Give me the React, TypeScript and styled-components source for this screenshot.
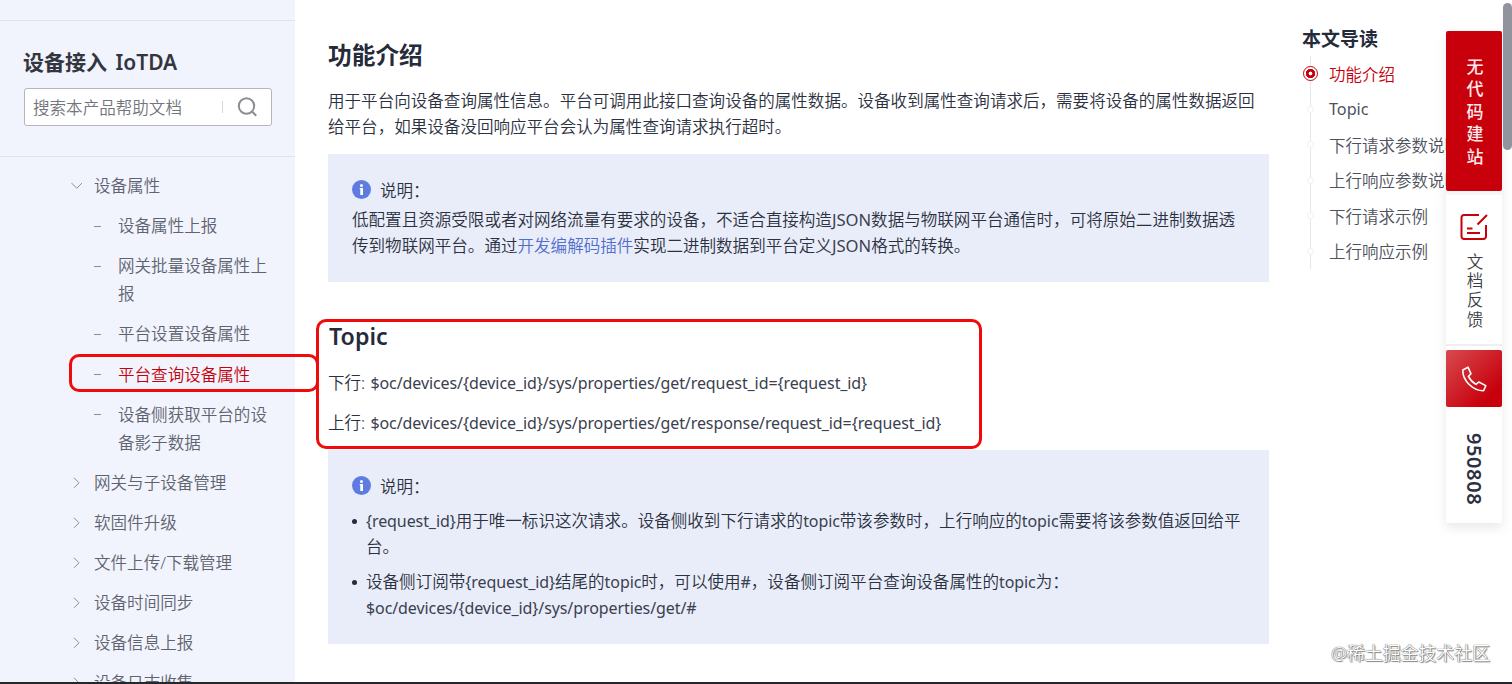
import React from 'react';
import styled, { createGlobalStyle } from 'styled-components';

type MenuItem = {
    lines: string[],
    kind: 'open' | 'closed' | 'leaf',
    active?: boolean,
}

const menu: MenuItem[] = [
    { lines: ['设备属性'], kind: 'open' },
    { lines: ['设备属性上报'], kind: 'leaf' },
    { lines: ['网关批量设备属性上', '报'], kind: 'leaf' },
    { lines: ['平台设置设备属性'], kind: 'leaf' },
    { lines: ['平台查询设备属性'], kind: 'leaf', active: true },
    { lines: ['设备侧获取平台的设', '备影子数据'], kind: 'leaf' },
    { lines: ['网关与子设备管理'], kind: 'closed' },
    { lines: ['软固件升级'], kind: 'closed' },
    { lines: ['文件上传/下载管理'], kind: 'closed' },
    { lines: ['设备时间同步'], kind: 'closed' },
    { lines: ['设备信息上报'], kind: 'closed' },
    { lines: ['设备日志收集'], kind: 'closed' },
]

const toc = ['功能介绍', 'Topic', '下行请求参数说明', '上行响应参数说明', '下行请求示例', '上行响应示例'];

const MenuMark: React.FC<{ kind: MenuItem['kind'] }> = ({ kind }) => {
    if (kind === 'leaf') {
        return <Dash />
    }
    return (
        <Arrow width="12" height="12" viewBox="0 0 12 12">
            <path d={kind === 'open' ? 'M1.5 3L6.8 8.3L12 3' : 'M4 0.8L9 5.8L4 10.8'} />
        </Arrow>
    )
}

const NoteTitle: React.FC = () => (
    <NoteHead>
        <svg width="19" height="19" viewBox="0 0 19 19">
            <circle cx="9.5" cy="9.5" r="9.5" fill="#5e7ce0" />
            <circle cx="9.5" cy="5.4" r="1.5" fill="#fff" />
            <path d="M7.8 8h3.2v7H8.3V9.3H7.8z" fill="#fff" />
        </svg>
        <span>说明：</span>
    </NoteHead>
)

const App: React.FC = () => {
    return (
        <Page>
            <GlobalStyle />
            <Sidebar>
                <SidebarTop />
                <SearchArea>
                    <ProductName>设备接入 IoTDA</ProductName>
                    <SearchBox>
                        <Placeholder>搜索本产品帮助文档</Placeholder>
                        <SearchDivider />
                        <svg width="20" height="20" viewBox="0 0 20 20" fill="none" stroke="#8d8e93" strokeWidth="2">
                            <circle cx="9.5" cy="9" r="7.7" />
                            <path d="M14.8 14.3L19.2 18.7" />
                        </svg>
                    </SearchBox>
                </SearchArea>
                <Menu>
                    {menu.map((item) => (
                        <MenuRow key={item.lines[0]} $leaf={item.kind === 'leaf'} $active={item.active}>
                            <MarkCell><MenuMark kind={item.kind} /></MarkCell>
                            <div>
                                {item.lines.map((line) => <MenuLine key={line}>{line}</MenuLine>)}
                            </div>
                        </MenuRow>
                    ))}
                </Menu>
            </Sidebar>

            <Content>
                <Heading>功能介绍</Heading>
                <Intro>
                    <Line>用于平台向设备查询属性信息。平台可调用此接口查询设备的属性数据。设备收到属性查询请求后，需要将设备的属性数据返回</Line>
                    <Line>给平台，如果设备没回响应平台会认为属性查询请求执行超时。</Line>
                </Intro>
                <Note $height={128}>
                    <NoteTitle />
                    <Line>低配置且资源受限或者对网络流量有要求的设备，不适合直接构造<Caps>JSON</Caps>数据与物联网平台通信时，可将原始二进制数据透</Line>
                    <Line>传到物联网平台。通过<Link>开发编解码插件</Link>实现二进制数据到平台定义<Caps>JSON</Caps>格式的转换。</Line>
                </Note>
                <TopicHeading>Topic</TopicHeading>
                <TopicLine>下行: <En>$oc/devices/{'{device_id}'}/sys/properties/get/request_id={'{request_id}'}</En></TopicLine>
                <TopicLine>上行: <En>$oc/devices/{'{device_id}'}/sys/properties/get/response/request_id={'{request_id}'}</En></TopicLine>
                <Note $height={194}>
                    <NoteTitle />
                    <Bullets>
                        <Bullet>
                            <Line><En>{'{request_id}'}</En>用于唯一标识这次请求。设备侧收到下行请求的<En>topic</En>带该参数时，上行响应的<En>topic</En>需要将该参数值返回给平</Line>
                            <Line>台。</Line>
                        </Bullet>
                        <Bullet>
                            <Line>设备侧订阅带<En>{'{request_id}'}</En>结尾的<En>topic</En>时，可以使用<En>#</En>，设备侧订阅平台查询设备属性的<En>topic</En>为：</Line>
                            <Line><En>$oc/devices/{'{device_id}'}/sys/properties/get/#</En></Line>
                        </Bullet>
                    </Bullets>
                </Note>
            </Content>

            <Toc>
                <TocTitle>本文导读</TocTitle>
                <TocList>
                    {toc.map((name, i) => (
                        <TocItem key={name} $active={i === 0}>
                            <TocDot $active={i === 0} />
                            <TocText $latin={name === 'Topic'}>{name}</TocText>
                        </TocItem>
                    ))}
                </TocList>
            </Toc>

            <FloatBar>
                <BuildSite><BuildText>无代码建站</BuildText></BuildSite>
                <Feedback>
                    <svg width="28" height="28" viewBox="0 0 28 28" fill="none" stroke="#c7000b" strokeWidth="2">
                        <path d="M19 2H4a2.5 2.5 0 0 0-2.5 2.5v19A2.5 2.5 0 0 0 4 26h19.5a2.5 2.5 0 0 0 2.5-2.5V12" />
                        <path d="M27 2L17.5 11.5M7 15.5h5.5M7 20h13" />
                    </svg>
                    <FeedbackText>文档反馈</FeedbackText>
                </Feedback>
                <Phone>
                    <svg width="26" height="26" viewBox="0 0 26 26" fill="none" stroke="#fff" strokeWidth="1.6" strokeLinejoin="round">
                        <path d="M1.8 4L7 1.2L10 7.8L7.4 10.4C9 13.6 11.8 16.6 15 18.4L17.8 16L24.8 19.6L22.6 24.8C12.4 25 1.4 14.8 1.8 4Z" />
                    </svg>
                </Phone>
                <Hotline>950808</Hotline>
            </FloatBar>

            <Frame $left={69} $top={354} $width={250} $height={38} />
            <Frame $left={316} $top={319} $width={666} $height={130} />
            <ScrollThumb />
            <Watermark>@稀土掘金技术社区</Watermark>
            <BottomEdge />
        </Page>
    )
}

export default App;

const GlobalStyle = createGlobalStyle`
    body {
        margin: 0;
        overflow: hidden;
        background: #fff;
    }
    * {
        box-sizing: border-box;
    }
`
const Page = styled.div`
    position: relative;
    display: flex;
    width: 1512px;
    height: 684px;
    overflow: hidden;
    font-family: 'Noto Sans', 'Noto Sans CJK SC', sans-serif;
    font-weight: 350;
    font-size: 16.56px;
    color: #2b3140;
    white-space: nowrap;
`
const Sidebar = styled.aside`
    flex: none;
    width: 295px;
    height: 684px;
    overflow: hidden;
    background: #f1f4fd;
`
const SidebarTop = styled.div`
    height: 21px;
    border-bottom: 1px solid #dfe3ee;
`
const SearchArea = styled.div`
    height: 136px;
    padding: 26px 23px 0 24px;
    border-bottom: 1px solid #dfe3ee;
`
const ProductName = styled.div`
    height: 41px;
    margin-left: -1px;
    line-height: 31px;
    font-size: 21px;
    font-weight: 600;
    word-spacing: 3px;
    color: #33363e;
`
const SearchBox = styled.div`
    display: flex;
    align-items: center;
    height: 38px;
    padding: 0 14px 0 8px;
    border: 1px solid #b4b6bf;
    border-radius: 3px;
    background: #fff;
`
const Placeholder = styled.span`
    flex: 1;
    color: #73757c;
`
const SearchDivider = styled.span`
    width: 1px;
    height: 12px;
    margin-right: 14px;
    background: #d5d6da;
`
const Menu = styled.div`
    padding-top: 9px;
`
const MenuRow = styled.div<{ $leaf: boolean, $active?: boolean }>`
    display: flex;
    padding: 6px 0 6px ${p => p.$leaf ? 94 : 70}px;
    color: ${p => p.$active ? '#c7000b' : '#5f6370'};
`
const MarkCell = styled.span`
    display: flex;
    align-items: center;
    width: 24px;
    height: 28px;
`
const Arrow = styled.svg`
    fill: none;
    stroke: #8a8e99;
    stroke-width: 1;
    overflow: visible;
`
const Dash = styled.span`
    width: 7px;
    height: 1px;
    background: #8a8e99;
`
const MenuLine = styled.div`
    height: 28.12px;
    line-height: 28px;
`
const Content = styled.main`
    flex: none;
    width: 941px;
    margin-left: 33px;
    padding-top: 36px;
`
const Heading = styled.h4`
    margin: 0;
    height: 52px;
    line-height: 38px;
    font-size: 23.7px;
    font-weight: 700;
    color: #252b3a;
`
const Line = styled.div`
    height: 26px;
    line-height: 26px;
`
const Intro = styled.div`
    height: 66px;
`
const Note = styled.div<{ $height: number }>`
    height: ${p => p.$height}px;
    padding: 22px 24px 0;
    background: #e9edfa;
`
const NoteHead = styled.div`
    display: flex;
    align-items: center;
    gap: 9px;
    height: 31px;
    line-height: 28px;

    svg {
        margin-bottom: 4px;
    }
    span {
        margin-bottom: 2px;
    }
`
const En = styled.span`
    font-weight: 400;
    font-size: 16px;
    letter-spacing: -.09px;
    color: #3a404f;
`
const Caps = styled.span`
    font-weight: 400;
    font-size: 16.6px;
    color: #3a404f;
`
const Link = styled.span`
    color: #526ecc;
`
const TopicHeading = styled.h4`
    margin: 38px 0 0 1px;
    height: 43px;
    line-height: 33px;
    font-size: 23.2px;
    font-weight: 600;
    color: #252b3a;
`
const TopicLine = styled.div`
    height: 40px;
    line-height: 40px;
    word-spacing: 1px;

    & + ${Note} {
        margin-top: 7px;
    }
`
const Bullets = styled.ul`
    margin: 5px 0 0;
    padding: 0;
    list-style: none;
`
const Bullet = styled.li`
    position: relative;
    padding-left: 14px;
    margin-bottom: 9px;

    &::before {
        content: '';
        position: absolute;
        left: 0;
        top: 11px;
        width: 5px;
        height: 5px;
        border-radius: 50%;
        background: #252b3a;
    }
`
const Toc = styled.nav`
    flex: none;
    width: 200px;
    margin-left: 33px;
    padding-top: 25px;
`
const TocTitle = styled.div`
    height: 31px;
    line-height: 29px;
    font-size: 19px;
    font-weight: 700;
    color: #252b3a;
`
const TocList = styled.div`
    margin-left: 8px;
    height: 213px;
    border-left: 1px solid #e6e7ea;
`
const TocItem = styled.div<{ $active: boolean }>`
    display: flex;
    align-items: center;
    height: 35.5px;
    margin-left: -8px;
    gap: 11px;
    color: ${p => p.$active ? '#c7000b' : '#4e525c'};
`
const TocDot = styled.span<{ $active: boolean }>`
    width: ${p => p.$active ? 15 : 7}px;
    height: ${p => p.$active ? 15 : 7}px;
    margin: 0 ${p => p.$active ? 0 : 4}px;
    border-radius: 50%;
    border: 1px solid ${p => p.$active ? '#c7000b' : '#eeeff1'};
    background: ${p => p.$active
        ? 'radial-gradient(circle, #fff 1.6px, #c7000b 2.2px, #c7000b 4.4px, #fff 5px)'
        : '#fff'};
`
const TocText = styled.span<{ $latin: boolean }>`
    font-weight: ${p => p.$latin ? 400 : 350};
    font-size: ${p => p.$latin ? 16.2 : 16.5}px;
`
const FloatBar = styled.div`
    position: absolute;
    left: 1446px;
    top: 31px;
    width: 56px;
    height: 492px;
    border-radius: 2px;
    background: #fff;
    box-shadow: 0 5px 12px rgba(0, 0, 0, .09);
`
const BuildSite = styled.div`
    display: flex;
    align-items: center;
    justify-content: center;
    height: 160px;
    padding-top: 5px;
    border-radius: 2px;
    background: #c7000b;
`
const BuildText = styled.div`
    color: #ffe9e9;
    font-size: 17px;
    font-weight: 500;
    letter-spacing: 5.4px;
    writing-mode: vertical-rl;
`
const Feedback = styled.div`
    display: flex;
    flex-direction: column;
    align-items: center;
    height: 155px;
    margin-bottom: 4px;
    padding-top: 18px;
    border-bottom: 2px solid #eeeff1;
    border-top: 4px solid #f7f7f8;
`
const FeedbackText = styled.div`
    margin-top: 12px;
    writing-mode: vertical-rl;
    letter-spacing: 2.8px;
    color: #3c3f47;
`
const Phone = styled.div`
    display: flex;
    align-items: center;
    justify-content: center;
    height: 57px;
    border-radius: 2px;
    background: linear-gradient(135deg, #d84a50, #c7000b 80%);
`
const Hotline = styled.div`
    height: 116px;
    width: 56px;
    padding-top: 26px;
    line-height: 56px;
    writing-mode: vertical-rl;
    font-size: 20px;
    font-weight: 600;
    letter-spacing: .6px;
`
const Frame = styled.div<{ $left: number, $top: number, $width: number, $height: number }>`
    position: absolute;
    left: ${p => p.$left}px;
    top: ${p => p.$top}px;
    width: ${p => p.$width}px;
    height: ${p => p.$height}px;
    border: 3px solid #f00a0a;
    border-radius: 10px;
`
const ScrollThumb = styled.div`
    position: absolute;
    left: 1503px;
    top: 3px;
    width: 9px;
    height: 147px;
    border-radius: 5px;
    background: #91949c;
`
const Watermark = styled.div`
    position: absolute;
    left: 1331px;
    top: 640px;
    line-height: 26px;
    font-size: 17.9px;
    color: #fff;
    text-shadow: 0 0 1px #666, 0 0 1px #777, 1px 1px 1px #888;
`
const BottomEdge = styled.div`
    position: absolute;
    left: 0;
    bottom: 0;
    width: 100%;
    height: 2px;
    background: #26272c;
`
